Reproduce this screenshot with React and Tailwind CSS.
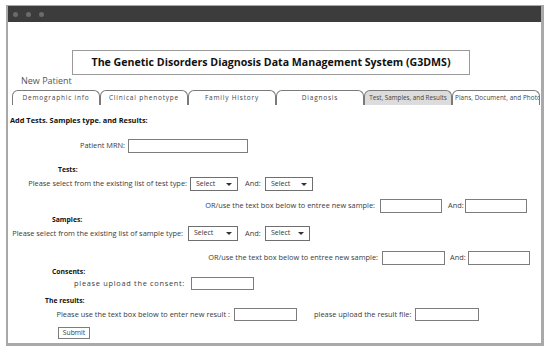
import React from "react";

const font = { fontFamily: '"Open Sans", "Noto Sans", sans-serif' };

function SelectBox({ className = "" }) {
  return (
    <div
      className={`h-[14px] border border-[#6f6f6f] bg-white flex items-center justify-between pl-[5px] pr-[5px] text-[7px] text-[#333] ${className}`}>
      <span>Select</span>
      <span className="w-0 h-0 border-l-[3px] border-r-[3px] border-t-[3px] border-l-transparent border-r-transparent border-t-[#333]" />
    </div>
  );
}

function TextBox({ className = "" }) {
  return <div className={`border border-[#7d7d7d] bg-white ${className}`} />;
}

const tabs = [
  { label: "Demographic info", cls: "text-[6.5px] tracking-[0.8px]" },
  { label: "Clinical phenotype", cls: "text-[6.5px] tracking-[0.8px]" },
  { label: "Family History", cls: "text-[6.5px] tracking-[0.8px]" },
  { label: "Diagnosis", cls: "text-[6.5px] tracking-[0.8px]" },
  { label: "Test, Samples, and Results", cls: "text-[6.3px]" },
  { label: "Plans, Document, and Photo", cls: "text-[6.3px] tracking-[0.1px] justify-start pl-[2px]" },
];

export default function App() {
  return (
    <div className="w-[550px] h-[352px] bg-white pt-[5px] pl-[6px]" style={font}>
      <div className="w-[538px] h-[341px] border-l-2 border-t border-r-[3px] border-b-[3px] border-[#a9a9a9] flex flex-col text-[#3a3a3a]">
        {/* title bar */}
        <div className="h-[16px] bg-[#3c3c3c] flex items-center gap-[8px] pl-[5px]">
          <span className="w-[5px] h-[5px] rounded-full bg-[#6b6b6b]" />
          <span className="w-[5px] h-[5px] rounded-full bg-[#6b6b6b]" />
          <span className="w-[5px] h-[5px] rounded-full bg-[#6b6b6b]" />
        </div>

        {/* system title */}
        <div className="mt-[28px] ml-[64px] w-[398px] h-[25px] border border-[#9a9a9a] flex items-center justify-center text-[10.6px] font-bold text-[#111] whitespace-nowrap">
          The Genetic Disorders Diagnosis Data Management System (G3DMS)
        </div>
        <div className="ml-[13px] h-[11px] leading-[11px] text-[9px] text-[#555]">New Patient</div>

        {/* tabs */}
        <div className="mt-[4px] ml-[4px] flex h-[15px]">
          {tabs.map((t, i) => (
            <div
              key={t.label}
              className={`w-[88px] h-[15px] border-l border-t border-r border-[#7a7a7a] rounded-t-[6px] flex items-center justify-center text-[#444] whitespace-nowrap overflow-hidden ${t.cls} ${
                i === 4 ? "bg-[#dcdcdc]" : "bg-white"
              }`}>
              {t.label}
            </div>
          ))}
        </div>

        {/* form */}
        <div className="text-[7.4px] text-[#3a3a3a] whitespace-nowrap">
          <div className="mt-[10px] ml-[2px] h-[12px] flex items-center font-bold text-[7.4px] text-[#111]">
            Add Tests. Samples type. and Results:
          </div>

          <div className="mt-[12px] h-[14px] flex items-center">
            <span className="w-[117px] text-right">Patient MRN:</span>
            <TextBox className="ml-[3px] w-[120px] h-[14px]" />
          </div>

          <div className="mt-[12px] ml-[50px] h-[10px] flex items-center font-bold text-[6.8px] text-[#111]">Tests:</div>
          <div className="mt-[2px] h-[14px] flex items-center">
            <span className="w-[179px] text-right">Please select from the existing list of test type:</span>
            <SelectBox className="ml-[3px] w-[48px]" />
            <span className="ml-[7px] w-[20px]">And:</span>
            <SelectBox className="w-[48px]" />
          </div>

          <div className="mt-[8px] h-[14px] flex items-center">
            <span className="w-[367px] text-right">OR/use the text box below to entree new sample:</span>
            <TextBox className="ml-[5px] w-[62px] h-[14px]" />
            <span className="ml-[6px] w-[17px]">And:</span>
            <TextBox className="w-[62px] h-[14px]" />
          </div>

          <div className="mt-[3px] ml-[44px] h-[9px] flex items-center font-bold text-[6.8px] text-[#111]">Samples:</div>
          <div className="mt-[1px] h-[15px] flex items-center">
            <span className="w-[175px] text-right">Please select from the existing list of sample type:</span>
            <SelectBox className="ml-[5px] w-[50px] h-[15px]" />
            <span className="ml-[7px] w-[20px]">And:</span>
            <SelectBox className="w-[45px] h-[15px]" />
          </div>

          <div className="mt-[10px] h-[14px] flex items-center">
            <span className="w-[370px] text-right">OR/use the text box below to entree new sample:</span>
            <TextBox className="ml-[4px] w-[63px] h-[14px]" />
            <span className="ml-[5px] w-[18px]">And:</span>
            <TextBox className="w-[62px] h-[14px]" />
          </div>

          <div className="mt-[3px] ml-[44px] h-[9px] flex items-center font-bold text-[6.8px] text-[#111]">Consents:</div>
          <div className="h-[13px] flex items-center">
            <span className="w-[177px] text-right tracking-[0.7px]">please upload the consent:</span>
            <TextBox className="ml-[6px] w-[63px] h-[13px]" />
          </div>

          <div className="mt-[7px] ml-[37px] h-[9px] flex items-center font-bold text-[6.8px] text-[#111]">The results:</div>
          <div className="mt-[2px] h-[13px] flex items-center">
            <span className="w-[222px] text-right">Please use the text box below to enter new result :</span>
            <TextBox className="ml-[4px] w-[63px] h-[13px]" />
            <span className="ml-[17px] w-[101px]">please upload the result file:</span>
            <TextBox className="w-[64px] h-[13px]" />
          </div>

          <div className="mt-[6px] ml-[50px] w-[32px] h-[12px] border border-[#7d7d7d] flex items-center justify-center text-[6.8px]">
            Submit
          </div>
        </div>
      </div>
    </div>
  );
}
